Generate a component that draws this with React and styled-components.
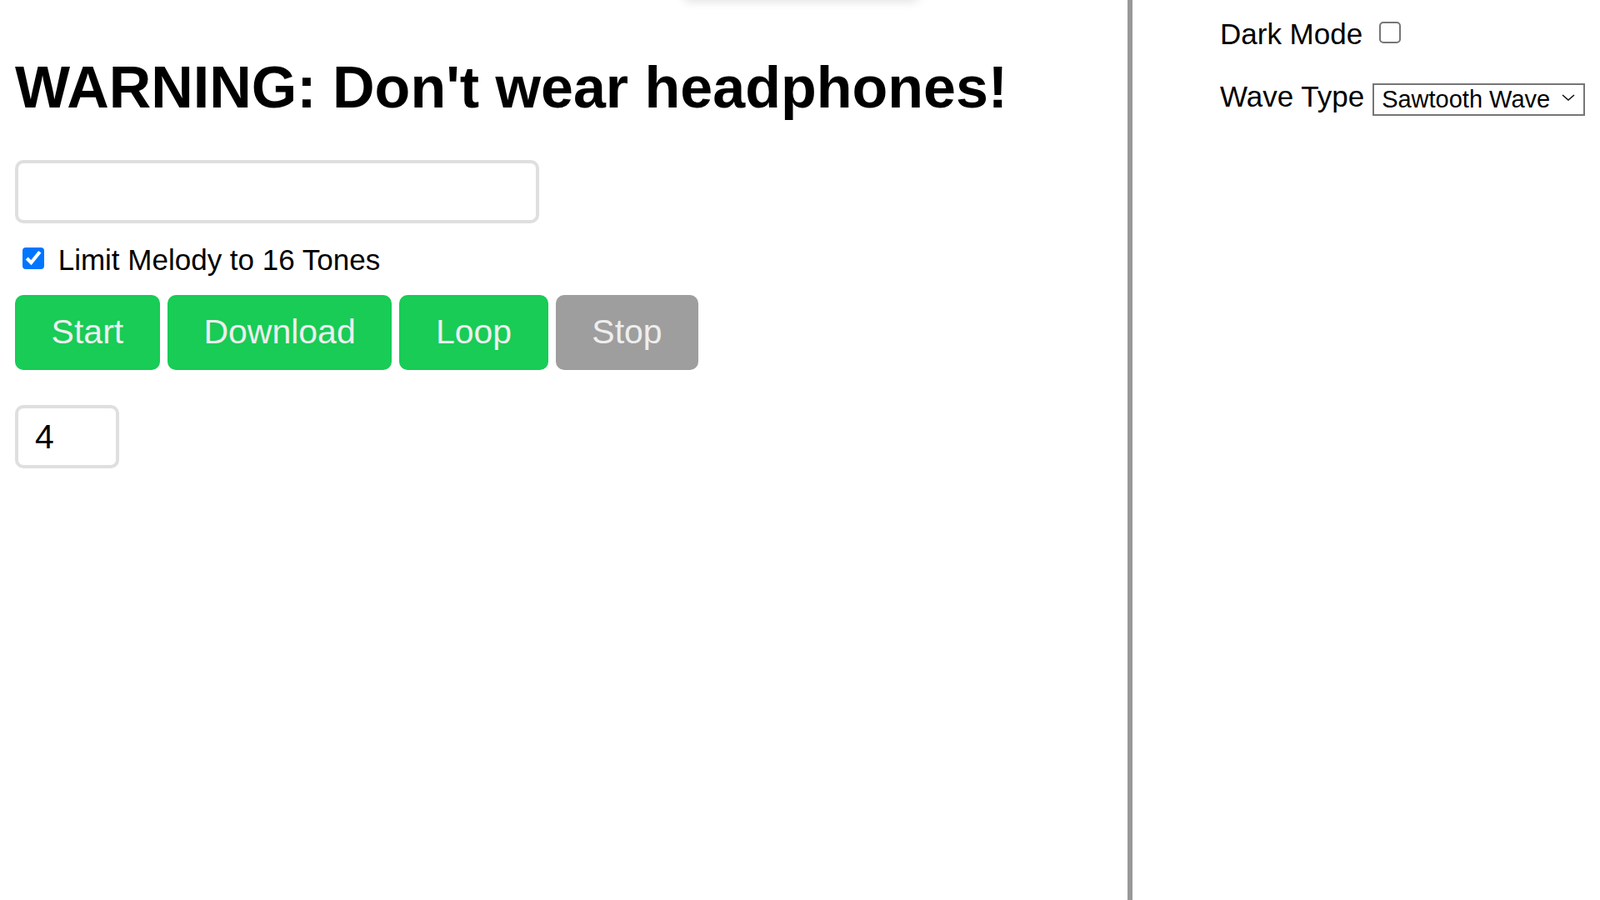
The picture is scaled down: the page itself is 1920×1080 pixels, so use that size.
import React from 'react'
import styled, { createGlobalStyle } from 'styled-components'

const GlobalStyle = createGlobalStyle`
  body {
    margin: 0;
    background: #fff;
    color: #000;
    font-family: "Liberation Sans", Arial, sans-serif;
  }
`

const Page = styled.div`
  position: relative;
  display: flex;
  min-height: 100vh;
  overflow: hidden;
`

// a toast parked just above the viewport, only its shadow shows
const HiddenToast = styled.div`
  position: absolute;
  top: -44px;
  left: 820px;
  width: 283px;
  height: 44px;
  border-radius: 8px;
  background: #fff;
  box-shadow: 0 2px 12px rgba(0, 0, 0, 0.12);
`

const Main = styled.main`
  flex: 1;
  padding: 0 18px;
`

const Heading = styled.h1`
  margin: 65px 0 46.5px;
  font-size: 70px;
  font-weight: 700;
  line-height: normal;
  white-space: nowrap;
`

const TextField = styled.input`
  display: block;
  box-sizing: border-box;
  width: 629px;
  height: 76.6px;
  padding: 0 20px;
  border: 4px solid #dfdfdf;
  border-radius: 10px;
  font-family: inherit;
  font-size: 41px;
  outline: none;
`

const OptionRow = styled.label`
  display: flex;
  align-items: flex-start;
  margin-top: 24.3px;
  font-size: 35px;
  line-height: normal;
`

const Check = styled.input`
  zoom: 2;
  margin: ${p => p.$m};
`

const ButtonRow = styled.div`
  display: flex;
  gap: 9px;
  margin-top: 21.2px;
`

const Button = styled.button`
  height: 90px;
  padding: 0 43.6px;
  border: none;
  border-radius: 10px;
  background: ${p => (p.$disabled ? '#9e9e9e' : '#18cc56')};
  color: #eeeeee;
  font-family: inherit;
  font-size: 41px;
  cursor: pointer;
`

const NumberField = styled.input`
  display: block;
  box-sizing: border-box;
  width: 125px;
  height: 76px;
  margin-top: 42.7px;
  padding: 0 0 0 20px;
  border: 4px solid #dfdfdf;
  border-radius: 10px;
  font-family: inherit;
  font-size: 41px;
  outline: none;
`

const Sidebar = styled.aside`
  box-sizing: border-box;
  width: 567px;
  padding: 21px 18px 0 105px;
  border-left: 6px solid #999;
  font-size: 35px;
  line-height: normal;
`

const SettingRow = styled.label`
  display: flex;
  align-items: flex-start;

  & + & {
    margin-top: 34.8px;
  }
`

const SelectWrap = styled.span`
  position: relative;
  display: inline-block;
  margin: 1.7px 0 0 10px;
`

const Select = styled.select`
  appearance: none;
  box-sizing: border-box;
  width: 254.4px;
  height: 39.3px;
  padding: 0 0 0 9px;
  border: 2px solid #767676;
  border-radius: 0;
  background: #fff;
  color: #000;
  font-family: inherit;
  font-size: 29px;
  outline: none;
`

const Chevron = styled.svg`
  position: absolute;
  top: 15.6px;
  right: 12px;
  pointer-events: none;
`

const App = () => (
  <Page>
    <GlobalStyle />
    <HiddenToast />
    <Main>
      <Heading>WARNING: Don't wear headphones!</Heading>
      <TextField type="text" />
      <OptionRow>
        <Check type="checkbox" defaultChecked $m="2.35px 8.35px 0 4.5px" />
        Limit Melody to 16 Tones
      </OptionRow>
      <ButtonRow>
        <Button>Start</Button>
        <Button>Download</Button>
        <Button>Loop</Button>
        <Button $disabled>Stop</Button>
      </ButtonRow>
      <NumberField type="number" defaultValue={4} />
    </Main>
    <Sidebar>
      <SettingRow>
        Dark Mode
        <Check type="checkbox" $m="2.35px 0 0 10px" />
      </SettingRow>
      <SettingRow>
        Wave Type
        <SelectWrap>
          <Select defaultValue="sawtooth">
            <option value="sine">Sine Wave</option>
            <option value="square">Square Wave</option>
            <option value="sawtooth">Sawtooth Wave</option>
            <option value="triangle">Triangle Wave</option>
          </Select>
          <Chevron width="16" height="8" viewBox="0 0 16 8">
            <path d="M1 1 L8 7 L15 1" fill="none" stroke="#111" strokeWidth="1.6" />
          </Chevron>
        </SelectWrap>
      </SettingRow>
    </Sidebar>
  </Page>
)

export default App
